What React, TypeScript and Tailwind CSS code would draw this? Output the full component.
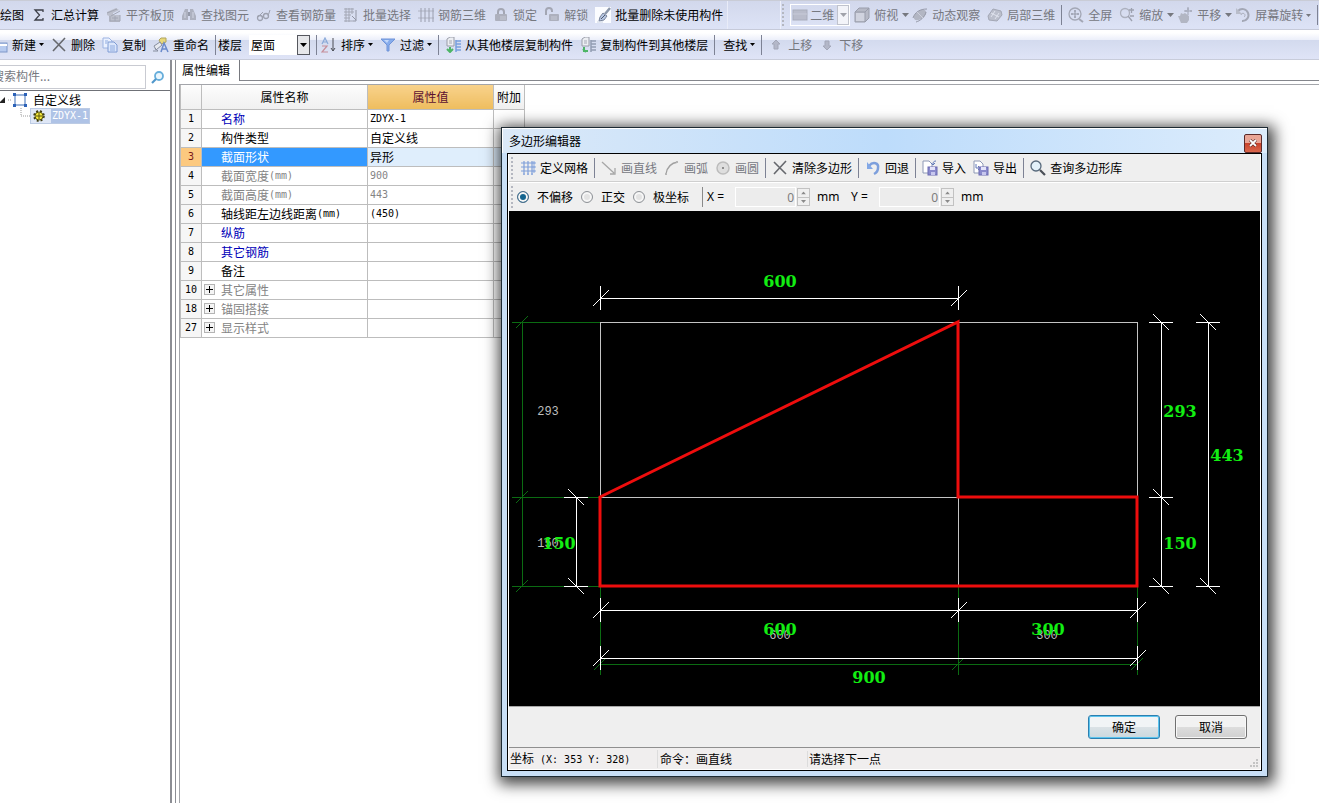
import { useState, type ReactNode } from "react";
import clsx from "clsx";

/* ---------- small shared pieces ---------- */

function Icon({ children, className }: { children: ReactNode; className?: string }) {
  return (
    <svg viewBox="0 0 16 16" className={clsx("h-4 w-4 shrink-0", className)} fill="none" aria-hidden="true">
      {children}
    </svg>
  );
}

function Caret({ wide }: { wide?: boolean }) {
  return wide ? (
    <svg viewBox="0 0 7 4" className="h-1 w-[7px] shrink-0" fill="currentColor" aria-hidden="true">
      <path d="M0 0h7L3.5 4z" />
    </svg>
  ) : (
    <svg viewBox="0 0 5 3" className="-ml-px h-[3px] w-[5px] shrink-0" fill="currentColor" aria-hidden="true">
      <path d="M0 0h5L2.5 3z" />
    </svg>
  );
}

function Separator() {
  return <div className="-mx-px h-5 w-px shrink-0 bg-[#7d8294]" />;
}

function Grip() {
  return (
    <div className="flex shrink-0 flex-col gap-[2px]">
      {[0, 1, 2, 3, 4, 5].map((n) => (
        <span key={n} className="h-[2px] w-[2px] bg-[#b4b7c0]" />
      ))}
    </div>
  );
}

function Mono({ children }: { children: ReactNode }) {
  return <span className="font-['DejaVu_Sans_Mono',monospace] text-[10px]">{children}</span>;
}

type ToolProps = {
  label: string;
  icon?: ReactNode;
  caret?: "small" | "wide";
  disabled?: boolean;
  className?: string;
};

function Tool({ label, icon, caret, disabled, className }: ToolProps) {
  return (
    <button
      type="button"
      disabled={disabled}
      className={clsx(
        "flex shrink-0 items-center gap-1 whitespace-nowrap",
        disabled ? "text-[#76787f]" : "text-black",
        className
      )}
    >
      {icon}
      <span>{label}</span>
      {caret && <Caret wide={caret === "wide"} />}
    </button>
  );
}

/* ---------- icons ---------- */

const SigmaIcon = () => (
  <Icon>
    <path d="M12 5V3H4l4.500 5L4 13h8v-2" stroke="#3c3f48" strokeWidth="1.300" />
  </Icon>
);

const SlabIcon = () => (
  <Icon>
    <path d="M1 5l9-4 3 2-6 3v2h7v7H3V9l-2-1z" fill="#bcbfcb" />
    <path d="M1 6l10-4M4 14h10V8M4 9v5M5 9l9-5M6 11h6M9 9v5" stroke="#a2a6b4" />
  </Icon>
);

const BinocularsIcon = () => (
  <Icon>
    <path d="M4 2h3v11H1V9zM9 2h3l3 7v4H9z" fill="#adb1bf" />
    <path d="M7 5h2v4H7z" fill="#9499a8" />
    <path d="M4 5v6M12 5v6" stroke="#d2d6e4" />
  </Icon>
);

const GlassesIcon = () => (
  <Icon>
    <circle cx="4" cy="11" r="2.500" stroke="#9da1af" strokeWidth="1.300" />
    <circle cx="10" cy="9" r="2.500" stroke="#9da1af" strokeWidth="1.300" />
    <path d="M2 10l5-5M12 9l2-6M6 10l2-1" stroke="#9da1af" />
  </Icon>
);

const BatchSelectIcon = () => (
  <Icon>
    <path d="M1 2h10M1 5h10M1 8h7M1 11h6M1 14h9M3 1v14M6 1v14M9 1v6" stroke="#a3a7b5" />
    <path d="M13 3v11h-3M9 9l4 4" stroke="#9195a4" />
  </Icon>
);

const RebarIcon = () => (
  <Icon>
    <path d="M0 4h16M0 11h16" stroke="#b0b4c2" />
    <path d="M3 1v14M7 1v14M11 1v14M15 1v14" stroke="#9a9eae" />
  </Icon>
);

const LockIcon = ({ open }: { open?: boolean }) => (
  <Icon>
    <path d={open ? "M2 8V4a3 3 0 0 1 6 0v1" : "M5 8V5a3 3 0 0 1 6 0v3"} stroke="#a3a6b3" strokeWidth="2" />
    <rect x={open ? 5 : 2} y="7" width={open ? 10 : 12} height="7" rx="1" fill="#adb0bd" />
    <path d="M7 10h6M7 12h6" stroke="#c6c9d5" />
  </Icon>
);

const BrushIcon = () => (
  <Icon>
    <rect width="16" height="16" fill="#fbfcff" />
    <path d="M15 1l-5 6" stroke="#8b97aa" strokeWidth="2.500" />
    <path d="M8 6l4 3-3 4-5 1 1-4z" fill="#b7c7e4" stroke="#7a859c" />
    <path d="M6 12l4-4" stroke="#4e596d" />
    <path d="M2 15h6" stroke="#c9d2e2" />
  </Icon>
);

const PlaneIcon = () => (
  <Icon>
    <rect x="1" y="3" width="14" height="10" fill="#b9bccb" stroke="#a9adbc" />
    <path d="M1 7h14" stroke="#c7cad8" />
  </Icon>
);

const CubeIcon = () => (
  <Icon>
    <path d="M1 5l4-4h10v10l-4 4H1z" fill="#b6b9c6" stroke="#999dab" />
    <path d="M2 6h9v8H2z" fill="#d0d3df" />
    <path d="M1 5h10v10M11 5l4-4" stroke="#999dab" />
  </Icon>
);

const OrbitIcon = () => (
  <Icon>
    <ellipse cx="8" cy="8" rx="7" ry="4" transform="rotate(-35 8 8)" fill="#b2b6c3" />
    <path d="M1 11c2-6 7-9 14-9M4 15c4-1 9-5 10-10" stroke="#9599a8" />
    <path d="M5 5l6 6" stroke="#cdd0dc" />
  </Icon>
);

const LocalCubeIcon = () => (
  <Icon>
    <path d="M1 9l5-7 8 2 1 4-5 6-8-1z" fill="#bbbfcc" stroke="#a3a7b5" />
    <path d="M4 10l4-6M8 12l4-6M4 6l8 4" stroke="#e0e3ee" />
  </Icon>
);

const FullScreenIcon = () => (
  <Icon>
    <circle cx="7" cy="7" r="6" stroke="#a3a7b5" strokeWidth="1.300" />
    <path d="M7 3v8M3 7h8M6 4h2M6 10h2M4 6v2M10 6v2" stroke="#9498a7" />
    <path d="M11 12l4 3" stroke="#a3a7b5" strokeWidth="2" />
  </Icon>
);

const ZoomIcon = () => (
  <Icon>
    <circle cx="6" cy="6" r="4.500" stroke="#acb0be" strokeWidth="1.300" />
    <path d="M9 9l4 5M10 3h5M12.500 1v5M11 9h4" stroke="#9da1af" strokeWidth="1.300" />
  </Icon>
);

const HandIcon = () => (
  <Icon>
    <path d="M1 9h2l1-3 2 1 2-1 4 3v4l-2 3H4z" fill="#b2b6c3" />
    <path d="M11 0v8M7 4h8M10 2h2M9 3v2M14 3v2" stroke="#9fa3b2" />
  </Icon>
);

const RotateIcon = () => (
  <Icon>
    <path d="M3 4a6 6 0 1 1 4 10" stroke="#a3a7b5" strokeWidth="2" />
    <path d="M1 1v6h6z" fill="#b9bdca" />
    <path d="M6 8a2 2 0 1 1 3 2" stroke="#a9adbb" />
  </Icon>
);

const CardIcon = () => (
  <Icon>
    <rect x="2" y="6" width="13" height="9" fill="#b7cbef" stroke="#7f97c8" />
    <path d="M2 8h13" stroke="#fff" strokeWidth="2" />
  </Icon>
);

const CrossIcon = () => (
  <Icon>
    <path d="M2 2l12 12M14 1L2 14" stroke="#66686d" strokeWidth="1.600" />
  </Icon>
);

const CopyIcon = () => (
  <Icon>
    <path d="M1 1h6l3 3v7H1z" fill="#eaf1ff" stroke="#9db4e2" />
    <path d="M6 5h6l3 3v7H6z" fill="#dbe6fb" stroke="#7f9bd4" />
    <path d="M8 9h5M8 11h5M8 13h5M3 4h3M3 6h2" stroke="#8fabe0" />
  </Icon>
);

const RenameIcon = () => (
  <Icon>
    <path d="M6 3l2-2h5v4l-5 2z" fill="#e8d878" stroke="#b0a45e" />
    <path d="M1 9l6-4 2 3-6 5zM0 14h5M2 11l3 3" fill="#e6e9f0" stroke="#868d9e" />
    <path d="M8 15l3-9 4 9M9 12h5" stroke="#6a8acb" strokeWidth="1.500" />
  </Icon>
);

const SortIcon = () => (
  <Icon>
    <path d="M1 7l3-6 3 6M2 5h4" stroke="#8aa9d8" strokeWidth="1.200" />
    <path d="M1 9h5l-5 6h6" stroke="#c58e99" strokeWidth="1.200" />
    <path d="M12 1v13M10 11l2 3 2-3" stroke="#4a4d55" />
  </Icon>
);

const FunnelIcon = () => (
  <Icon>
    <path d="M1 2h14L9 8v6H7V8z" fill="#86acec" stroke="#6f93d8" />
    <path d="M4 3h5L7 6z" fill="#c3d8fa" />
  </Icon>
);

const FloorCopyIcon = ({ to }: { to?: boolean }) => (
  <Icon>
    <path d="M2 2l3-2h4v9H2z" fill="#eceef3" stroke="#9a9da8" />
    <path d="M4 4h3M4 6h3" stroke="#a5a8b3" />
    <path d="M11 3v12M11 4h5M11 7h5M11 10h5M11 13h5" stroke={to ? "#929db2" : "#78a0de"} strokeWidth="1.500" />
    <path d={to ? "M4 10v4h4M3 12l3 3" : "M5 10v5M2 12l3 3 3-3"} stroke="#4db566" strokeWidth="2" />
  </Icon>
);

const ArrowIcon = ({ down }: { down?: boolean }) => (
  <Icon className={down ? "rotate-180" : ""}>
    <path d="M8 3l4 4h-2v5H6V7H4z" fill="#b3b7c8" stroke="#a3a7b8" />
  </Icon>
);

const GridIcon = () => (
  <Icon>
    <path d="M4 1v14M8 1v14M12 1v14M1 3h14M1 7h14M1 11h14" stroke="#7f9fd9" strokeWidth="1.200" />
    <path d="M13 2h2v2h-2zM13 6h2v2h-2zM13 10h2v2h-2zM3 14h2M7 14h2M11 14h2" stroke="#8aa8de" />
  </Icon>
);

const LineIcon = () => (
  <Icon>
    <path d="M1 2l12 11M14 8v6H9" stroke="#a7a7a7" strokeWidth="1.300" />
  </Icon>
);

const ArcIcon = () => (
  <Icon>
    <path d="M2 14C3 7 7 3 14 2" stroke="#a0a0a0" strokeWidth="1.300" />
    <path d="M1 13h2v2H1zM12 1h2v2h-2z" fill="#b5b5b5" />
  </Icon>
);

const CircleIcon = () => (
  <Icon>
    <circle cx="8" cy="8" r="6" fill="#dedede" stroke="#bcbcbc" strokeWidth="1.500" />
    <path d="M7 8h2" stroke="#8e8e8e" strokeWidth="2" />
  </Icon>
);

const UndoIcon = () => (
  <Icon>
    <path d="M4 6c4-5 10-3 9 2 0 3-2 5-4 6" stroke="#7d9fdc" strokeWidth="2.500" />
    <path d="M2 2v7h6z" fill="#83a8e6" />
  </Icon>
);

const DiskIcon = ({ out }: { out?: boolean }) => (
  <Icon>
    <path d="M1 1h6l3 3v9H1z" fill="#fff" stroke="#8e99b6" />
    <path d={out ? "M3 4v4h4M5 6l2 2-2 2" : "M14 1c-2 0-3 1-3 3M9 3l2 2 2-2"} stroke="#6079b8" />
    <rect x="6" y="7" width="9" height="8" fill="#8a8acc" stroke="#6a6ab2" />
    <path d="M8 7h5v3H8z" fill="#e4e4fa" />
    <path d="M9 12h4v3H9z" fill="#c7c7ee" />
  </Icon>
);

const SearchIcon = () => (
  <Icon>
    <circle cx="6" cy="6" r="5" fill="#e2f1fa" stroke="#586a7c" strokeWidth="1.300" />
    <path d="M10 10l5 5" stroke="#4a4f57" strokeWidth="2.200" />
  </Icon>
);

/* ---------- top toolbars ---------- */

function ViewToolbar() {
  return (
    <div className="flex h-[30px] shrink-0 items-center overflow-hidden border-t border-b border-t-[#c9ccd6] border-b-[#c6cad9] bg-linear-to-b from-[#d2d8ec] to-[#dde3f6]">
      <div className="flex h-full shrink-0 items-center gap-[7px] border-r border-[#e9ecf8] pr-1">
        <Tool label="绘图" />
        <Tool label="汇总计算" icon={<SigmaIcon />} />
        <Tool label="平齐板顶" icon={<SlabIcon />} disabled />
        <Tool label="查找图元" icon={<BinocularsIcon />} disabled />
        <Tool label="查看钢筋量" icon={<GlassesIcon />} disabled />
        <Tool label="批量选择" icon={<BatchSelectIcon />} disabled />
        <Tool label="钢筋三维" icon={<RebarIcon />} disabled />
        <Tool label="锁定" icon={<LockIcon />} disabled />
        <Tool label="解锁" icon={<LockIcon open />} disabled />
        <Tool label="批量删除未使用构件" icon={<BrushIcon />} />
      </div>
      <div className="h-full w-[52px] shrink-0" />
      <div className="flex h-full flex-1 items-center border-l border-[#eef0fa] pl-px">
        <Grip />
        <div className="ml-[6px] flex h-[22px] shrink-0 items-center border border-white pl-px text-[#76787f]">
          <PlaneIcon />
          <select disabled aria-label="视图" className="w-7 appearance-none overflow-hidden pl-[2px] opacity-100">
            <option>二维</option>
          </select>
          <span className="ml-px flex h-5 w-3 items-center justify-center border border-[#c0c3cd] bg-[#f3f4f9] text-[#a0a2aa]">
            <Caret wide />
          </span>
        </div>
        <div className="ml-1 flex items-center gap-[3px]">
          <Tool label="俯视" icon={<CubeIcon />} caret="wide" disabled />
          <Tool label="动态观察" icon={<OrbitIcon />} disabled className="mr-1" />
          <Tool label="局部三维" icon={<LocalCubeIcon />} disabled className="mr-1" />
          <Separator />
          <Tool label="全屏" icon={<FullScreenIcon />} disabled className="mr-1 ml-1" />
          <Tool label="缩放" icon={<ZoomIcon />} caret="wide" disabled />
          <Tool label="平移" icon={<HandIcon />} caret="wide" disabled />
          <Tool label="屏幕旋转" icon={<RotateIcon />} caret="small" disabled className="mr-1" />
          <Separator />
        </div>
      </div>
    </div>
  );
}

function ComponentToolbar() {
  return (
    <div className="flex h-[30px] shrink-0 items-center gap-[7px] overflow-hidden border-b border-[#c8ccda] bg-[linear-gradient(#ffffff_10%,#eceffa_34%,#d3daee_36%,#dfe4f7)]">
      <Tool label="新建" icon={<CardIcon />} caret="small" className="-ml-2" />
      <Tool label="删除" icon={<CrossIcon />} />
      <Tool label="复制" icon={<CopyIcon />} />
      <Tool label="重命名" icon={<RenameIcon />} />
      <Separator />
      <label htmlFor="floor" className="-ml-1 shrink-0">
        楼层
      </label>
      <div className="relative shrink-0">
        <select id="floor" className="h-5 w-[61px] appearance-none bg-white pl-[2px]">
          <option>屋面</option>
          <option>首层</option>
        </select>
        <span className="pointer-events-none absolute top-0 right-0 flex h-5 w-[13px] items-center justify-center border border-[#55575e] bg-[#e6e7ea]">
          <Caret wide />
        </span>
      </div>
      <Separator />
      <Tool label="排序" icon={<SortIcon />} caret="small" className="-ml-[2px]" />
      <Tool label="过滤" icon={<FunnelIcon />} caret="small" />
      <Separator />
      <Tool label="从其他楼层复制构件" icon={<FloorCopyIcon />} />
      <Tool label="复制构件到其他楼层" icon={<FloorCopyIcon to />} />
      <Separator />
      <Tool label="查找" caret="small" className="ml-[2px]" />
      <Separator />
      <Tool label="上移" icon={<ArrowIcon />} disabled />
      <Tool label="下移" icon={<ArrowIcon down />} disabled />
    </div>
  );
}

/* ---------- left tree ---------- */

function ComponentTree() {
  return (
    <aside className="flex w-[172px] shrink-0 flex-col border-r-2 border-[#8c8e94]">
      <div className="flex h-[30px] items-center pt-1">
        <input
          type="text"
          aria-label="搜索构件"
          placeholder="搜索构件..."
          className="h-6 w-[146px] border border-l-0 border-[#c9cbd2] pb-1 -indent-2 placeholder:text-[#77797f]"
        />
        <button type="button" aria-label="搜索" className="ml-1">
          <Icon>
            <circle cx="9" cy="7" r="4" fill="#eaf6fd" stroke="#67aedb" strokeWidth="1.800" />
            <path d="M6 10l-4 4" stroke="#5097cb" strokeWidth="2.200" />
          </Icon>
        </button>
      </div>
      <ul className="border-t border-[#6f7177] pt-px">
        <li>
          <div className="flex h-4 items-center">
            <svg viewBox="0 0 12 16" className="h-4 w-3" aria-hidden="true">
              <path d="M5 5v6H-1z" fill="#222" />
              <path d="M8 8h4" stroke="#999" strokeDasharray="1 1" />
            </svg>
            <Icon>
              <rect x="3" y="3" width="10" height="10" stroke="#3d6cb4" />
              <path d="M1 1h3v3H1zM12 1h3v3h-3zM1 12h3v3H1zM12 12h3v3h-3z" fill="#2c62b8" />
            </Icon>
            <span className="ml-[5px]">自定义线</span>
          </div>
          <ul>
            <li className="flex h-4 items-center">
              <svg viewBox="0 0 30 16" className="h-4 w-[30px]" fill="none" aria-hidden="true">
                <path d="M21 0v8h9" stroke="#999" strokeDasharray="1 1" />
              </svg>
              <span className="flex h-4 items-center border border-[#bccbe4] bg-[#dfe7f6]">
                <Icon>
                  <circle cx="8" cy="8" r="4" fill="#f4e83a" stroke="#5a5610" />
                  <circle cx="8" cy="8" r="5" stroke="#3a380c" strokeWidth="1.500" strokeDasharray="2 2" />
                  <path d="M8 5v6M5 8h6" stroke="#5a5610" />
                </Icon>
                <span className="ml-1 flex h-[14px] items-center bg-[#afc3e6] px-px text-white">
                  <Mono>ZDYX-1</Mono>
                </span>
              </span>
            </li>
          </ul>
        </li>
      </ul>
    </aside>
  );
}

/* ---------- property grid ---------- */

type Row = {
  no: number;
  name: string;
  unit?: string;
  value?: string;
  latin?: boolean;
  tone?: "link" | "muted" | "selected";
  group?: boolean;
};

const rows: Row[] = [
  { no: 1, name: "名称", value: "ZDYX-1", latin: true, tone: "link" },
  { no: 2, name: "构件类型", value: "自定义线" },
  { no: 3, name: "截面形状", value: "异形", tone: "selected" },
  { no: 4, name: "截面宽度", unit: "(mm)", value: "900", latin: true, tone: "muted" },
  { no: 5, name: "截面高度", unit: "(mm)", value: "443", latin: true, tone: "muted" },
  { no: 6, name: "轴线距左边线距离", unit: "(mm)", value: "(450)", latin: true },
  { no: 7, name: "纵筋", tone: "link" },
  { no: 8, name: "其它钢筋", tone: "link" },
  { no: 9, name: "备注" },
  { no: 10, name: "其它属性", tone: "muted", group: true },
  { no: 18, name: "锚固搭接", tone: "muted", group: true },
  { no: 27, name: "显示样式", tone: "muted", group: true },
];

function PropertyTable() {
  return (
    <table className="w-[345px] table-fixed border-collapse">
      <colgroup>
        <col className="w-[21px]" />
        <col className="w-[166px]" />
        <col className="w-[126px]" />
        <col />
      </colgroup>
      <thead>
        <tr className="h-6 bg-linear-to-b from-[#fdfdfd] to-[#f0f0f0]">
          <th className="border border-t-0 border-[#bdbdbd]" />
          <th className="border border-t-0 border-[#bdbdbd] font-normal">属性名称</th>
          <th className="border border-t-0 border-[#bdbdbd] bg-linear-to-b from-[#f8d28b] to-[#eebd5e] font-normal text-[#5c1030]">
            属性值
          </th>
          <th className="border border-t-0 border-[#bdbdbd] font-normal whitespace-nowrap">附加</th>
        </tr>
      </thead>
      <tbody>
        {rows.map((row) => {
          const selected = row.tone === "selected";
          const muted = row.tone === "muted";
          return (
            <tr key={row.no} className="h-[19px]">
              <td
                className={clsx(
                  "border border-[#bdbdbd]",
                  selected ? "bg-[#fcc97f] text-[#7a1a1a]" : "bg-[#f6f6f6]"
                )}
              >
                <div className="flex h-4 items-center justify-center">
                  <Mono>{row.no}</Mono>
                </div>
              </td>
              <td
                className={clsx(
                  "border border-[#bdbdbd]",
                  selected && "bg-[#3399ff] text-white",
                  muted && "text-[#848484]",
                  row.tone === "link" && "text-[#0000b8]"
                )}
              >
                <div className="flex h-4 items-center">
                  <span className="flex w-[19px] shrink-0 pl-[2px]">
                    {row.group && (
                      <button
                        type="button"
                        aria-label={`展开${row.name}`}
                        className="border border-[#b4b4b4] bg-[#f4f4f4]"
                      >
                        <svg viewBox="0 0 9 9" className="h-[9px] w-[9px]" aria-hidden="true">
                          <path d="M4 1h1v3h3v1H5v3H4V5H1V4h3z" fill="#000" />
                        </svg>
                      </button>
                    )}
                  </span>
                  <span>{row.name}</span>
                  {row.unit && <Mono>{row.unit}</Mono>}
                </div>
              </td>
              <td
                className={clsx(
                  "border border-[#bdbdbd] pl-[2px]",
                  selected && "bg-[#dfeefc]",
                  muted && "text-[#848484]"
                )}
              >
                <div className="flex h-4 items-center">
                  {row.latin ? <Mono>{row.value}</Mono> : row.value}
                </div>
              </td>
              <td className={clsx("border border-[#bdbdbd]", selected && "bg-[#dfeefc]")} />
            </tr>
          );
        })}
      </tbody>
    </table>
  );
}

/* ---------- polygon drawing ---------- */

// horizontal dimension line between x1 and x2
function DimH({ x1, x2, y }: { x1: number; x2: number; y: number }) {
  return (
    <path
      d={`M${x1} ${y}H${x2}M${x1} ${y - 12}v24M${x2} ${y - 12}v24M${x1 - 7} ${y + 8}l16 -16M${x2 - 7} ${y + 8}l16 -16`}
    />
  );
}

// vertical dimension line between y1 and y2
function DimV({ x, y1, y2 }: { x: number; y1: number; y2: number }) {
  return (
    <path
      d={`M${x} ${y1}V${y2}M${x - 12} ${y1}h24M${x - 12} ${y2}h24M${x - 8} ${y1 - 8}l16 16M${x - 8} ${y2 - 8}l16 16`}
    />
  );
}

function PolygonCanvas() {
  return (
    <svg viewBox="0 0 751 495" className="block w-full bg-black" fill="none">
      <g stroke="#0b6b12" shapeRendering="crispEdges">
        <path d="M3 111H91M3 286H91M3 375H91M13 111V375" />
        <path d="M91 375V464M449 375V464M628 375V464M91 453H628" />
        <path d="M7 117l12 -12M7 292l12 -12M7 381l12 -12M85 459l12 -12M443 459l12 -12M622 459l12 -12" />
      </g>
      <g stroke="#c4c4c4" shapeRendering="crispEdges">
        <path d="M91 111H628V375H91ZM91 286H628M449 111V375" />
      </g>
      <g fill="#bdbdbd" fontSize="12" textAnchor="middle" className="font-['Liberation_Mono',monospace]">
        <text x="39" y="204">293</text>
        <text x="39" y="336">150</text>
        <text x="271" y="428">600</text>
        <text x="538" y="428">300</text>
      </g>
      <g stroke="#fff" shapeRendering="crispEdges">
        <DimH x1={91} x2={449} y={87} />
        <DimH x1={91} x2={449} y={399} />
        <DimH x1={449} x2={628} y={399} />
        <DimH x1={91} x2={628} y={447} />
        <DimV x={67} y1={286} y2={375} />
        <DimV x={652} y1={111} y2={286} />
        <DimV x={652} y1={286} y2={375} />
        <DimV x={699} y1={111} y2={375} />
      </g>
      <path d="M91 286L449 111V286H628V375H91Z" stroke="#ee0d0d" strokeWidth="3" />
      <g
        fill="#12ee12"
        fontSize="16"
        fontWeight="700"
        textAnchor="middle"
        className="font-['DejaVu_Serif',serif]"
      >
        <text x="271" y="76">600</text>
        <text x="50" y="338">150</text>
        <text x="671" y="206">293</text>
        <text x="671" y="338">150</text>
        <text x="718" y="250">443</text>
        <text x="271" y="424">600</text>
        <text x="539" y="424">300</text>
        <text x="360" y="472">900</text>
      </g>
    </svg>
  );
}

/* ---------- dialog ---------- */

function OffsetField({ axis }: { axis: string }) {
  const id = `offset-${axis}`;
  return (
    <div className="flex items-center font-['Noto_Sans',sans-serif]">
      <label htmlFor={id} className="w-7 whitespace-nowrap">
        {axis} =
      </label>
      <input
        id={id}
        type="text"
        defaultValue="0"
        disabled
        className="h-5 w-[61px] border border-white bg-[#ececec] px-px text-right text-[#7c7c7c]"
      />
      <span className="ml-px flex h-[18px] w-[13px] flex-col border border-[#c2c2c2] text-[#8a8a8a]">
        <span className="flex flex-1 rotate-180 items-center justify-center">
          <Caret />
        </span>
        <span className="flex flex-1 items-center justify-center border-t border-[#c2c2c2]">
          <Caret />
        </span>
      </span>
      <span className="ml-[7px] w-[34px]">mm</span>
    </div>
  );
}

const modes = ["不偏移", "正交", "极坐标"];

function PolygonDialog() {
  const [mode, setMode] = useState(modes[0]);

  return (
    <section
      role="dialog"
      aria-labelledby="dialog-title"
      className="absolute top-[127px] left-[501px] w-[767px] border border-[#1d2a33] bg-[#c9dff6] px-[5px] pb-[5px] shadow-[2px_3px_14px_4px_rgba(0,0,0,0.75)]"
    >
      <header className="-mx-[5px] flex h-[25px] items-center justify-between border-t border-l border-white bg-linear-to-r from-[#dbe9f8] via-[#bddcfb] to-[#dcecfc] pr-[5px] pl-[6px]">
        <h1 id="dialog-title">多边形编辑器</h1>
        <button
          type="button"
          aria-label="关闭"
          className="mt-1 flex h-[19px] w-[18px] items-center justify-center rounded-xs border border-[#5a2a2a] bg-linear-to-b from-[#e9a596] from-45% via-[#c9432c] via-50% to-[#d9664c]"
        >
          <svg viewBox="0 0 8 8" className="h-2 w-2" aria-hidden="true">
            <path d="M1 1l6 6M7 1L1 7" stroke="#4a2020" strokeWidth="3" />
            <path d="M1 1l6 6M7 1L1 7" stroke="#fff" strokeWidth="1.800" />
          </svg>
        </button>
      </header>

      <div className="border border-black bg-[#efefef]">
        <div className="border-x border-white">
          <div className="flex h-7 items-center gap-[7px] border-b border-[#cfcfcf] pl-[2px]">
            <Grip />
            <Tool label="定义网格" icon={<GridIcon />} />
            <Separator />
            <Tool label="画直线" icon={<LineIcon />} disabled />
            <Tool label="画弧" icon={<ArcIcon />} disabled />
            <Tool label="画圆" icon={<CircleIcon />} disabled />
            <Separator />
            <Tool label="清除多边形" icon={<CrossIcon />} />
            <Separator />
            <Tool label="回退" icon={<UndoIcon />} />
            <Separator />
            <Tool label="导入" icon={<DiskIcon />} />
            <Tool label="导出" icon={<DiskIcon out />} />
            <Separator />
            <Tool label="查询多边形库" icon={<SearchIcon />} />
          </div>

          <div className="flex h-[29px] items-center border-t border-white pl-[2px]">
            <Grip />
            <div className="ml-1 flex items-center gap-2">
              {modes.map((m) => (
                <label key={m} className="flex items-center gap-2">
                  <input
                    type="radio"
                    name="mode"
                    checked={mode === m}
                    onChange={() => setMode(m)}
                    className="h-3 w-3 appearance-none rounded-full border border-[#8e9297] bg-[#e3e3e3] inset-ring-2 inset-ring-[#f6f6f6] checked:border-[#4b6f8c] checked:bg-[#12648f]"
                  />
                  {m}
                </label>
              ))}
            </div>
            <div className="mr-1 ml-[13px] h-5 w-px bg-[#8a8a8a]" />
            <OffsetField axis="X" />
            <OffsetField axis="Y" />
          </div>

          <PolygonCanvas />

          <div className="flex h-[41px] items-center justify-end gap-[15px] border-t border-[#a8a8a8] pr-[13px]">
            <button
              type="button"
              className="h-6 w-[72px] rounded-[3px] border border-[#2c7fb0] bg-linear-to-b from-[#f1f4f6] from-50% via-[#dbe2e6] via-50% to-[#cbd8de] inset-ring inset-ring-[#5bc4ee]"
            >
              确定
            </button>
            <button
              type="button"
              className="h-6 w-[72px] rounded-[3px] border border-[#707070] bg-linear-to-b from-[#f2f2f2] from-50% via-[#dddddd] via-50% to-[#d0d0d0] inset-ring inset-ring-[#f8f8f8]"
            >
              取消
            </button>
          </div>

          <footer className="flex h-[23px] items-center border-t border-b border-t-[#8f8f8f] border-b-white bg-[#f0eeee]">
            <span className="w-[149px] border-r border-[#dcdcdc] pl-px">
              坐标<Mono> (X: 353 Y: 328)</Mono>
            </span>
            <span className="w-[150px] border-r border-[#dcdcdc] pl-[2px]">命令：画直线</span>
            <span className="flex-1 pl-px">请选择下一点</span>
            <svg viewBox="0 0 10 10" className="mr-px h-[10px] w-[10px] self-end" aria-hidden="true">
              <path d="M7 0h2v2H7zM4 3h2v2H4zM7 3h2v2H7zM1 6h2v2H1zM4 6h2v2H4zM7 6h2v2H7z" fill="#c4c4c4" />
            </svg>
          </footer>
        </div>
      </div>
    </section>
  );
}

export default function App() {
  return (
    <div className="relative flex min-h-screen flex-col overflow-hidden bg-white font-['Noto_Sans_CJK_SC',sans-serif] text-[12px] leading-4 text-black">
      <ViewToolbar />
      <ComponentToolbar />
      <div className="flex flex-1">
        <ComponentTree />
        <main className="ml-[3px] flex flex-1 flex-col border-l border-[#8c8e94]">
          <div className="flex h-[21px] shrink-0">
            <h2 className="w-16 border-r border-[#77797f] pt-[2px] pl-[6px]">属性编辑</h2>
            <div className="flex-1 border-b border-[#85878d]" />
          </div>
          <div className="mt-[3px] ml-[3px] flex-1 border-t border-l border-[#a3a5aa]">
            <PropertyTable />
          </div>
        </main>
      </div>
      <PolygonDialog />
    </div>
  );
}
